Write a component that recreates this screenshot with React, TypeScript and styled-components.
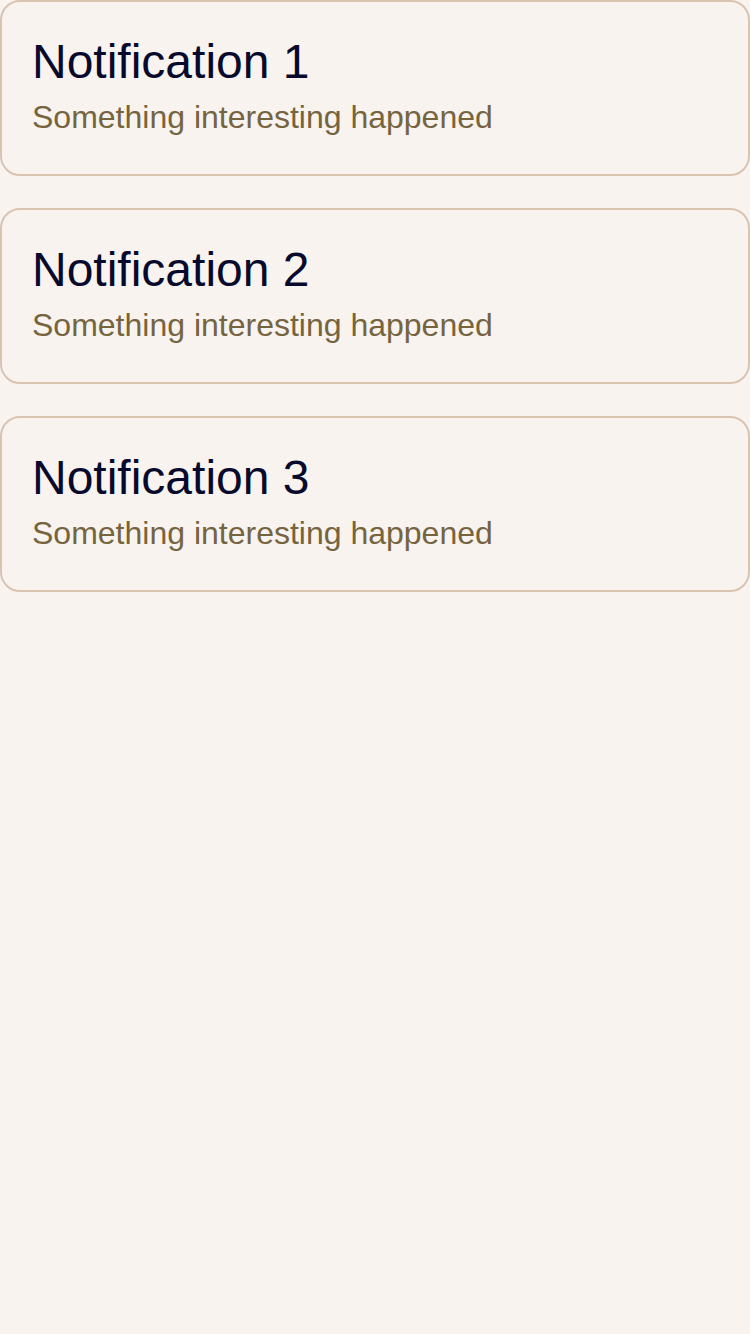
import React from "react";
import styled, { createGlobalStyle } from "styled-components";

const Global = createGlobalStyle`
  html, body {
    margin: 0;
    padding: 0;
    background: #f9f3ef;
  }
  body {
    font-family: "Liberation Sans", Arial, sans-serif;
    min-height: 1334px;
  }
  * { box-sizing: border-box; }
`;

const List = styled.div`
  display: flex;
  flex-direction: column;
  gap: 32px;
  width: 750px;
`;

const Card = styled.div`
  height: 176px;
  border: 2px solid #d9c4b2;
  border-radius: 20px;
  background: #f9f3ef;
  padding: 32px 30px 0;
  display: flex;
  flex-direction: column;
`;

const Title = styled.div`
  font-size: 48px;
  color: #070a2c;
  line-height: normal;
`;

const Subtitle = styled.div`
  margin-top: 10px;
  font-size: 32px;
  color: #76643f;
  line-height: normal;
`;

const items = [1, 2, 3];

export default function App() {
  return (
    <>
      <Global />
      <List>
        {items.map((n) => (
          <Card key={n}>
            <Title>Notification {n}</Title>
            <Subtitle>Something interesting happened</Subtitle>
          </Card>
        ))}
      </List>
    </>
  );
}
